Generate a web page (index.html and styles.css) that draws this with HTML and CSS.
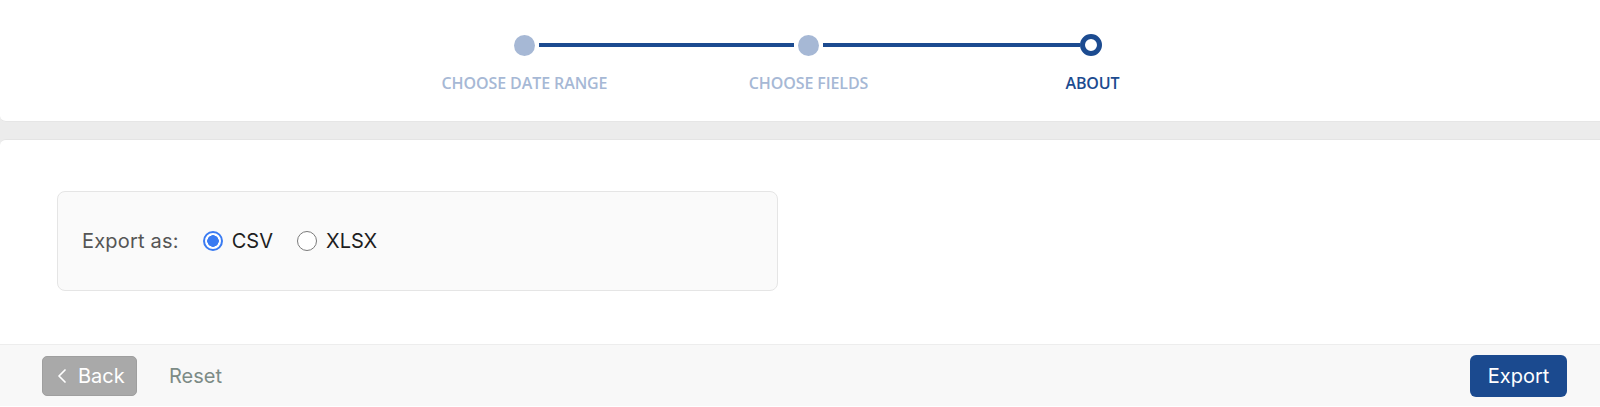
FILE: index.html
```html
<!DOCTYPE html>
<html>
<head>
<meta charset="utf-8">
<link rel="stylesheet" href="styles.css">
</head>
<body>
<div class="shell">
  <header class="header">
    <div class="stepper">
      <div class="step done">
        <div class="track"><span class="line hidden"></span><span class="dot"></span><span class="line"></span></div>
        <div class="label">CHOOSE DATE RANGE</div>
      </div>
      <div class="step done">
        <div class="track"><span class="line"></span><span class="dot"></span><span class="line"></span></div>
        <div class="label">CHOOSE FIELDS</div>
      </div>
      <div class="step current">
        <div class="track"><span class="line"></span><span class="dot"></span><span class="line hidden"></span></div>
        <div class="label">ABOUT</div>
      </div>
    </div>
  </header>
  <main class="panel">
    <div class="body">
      <div class="export-box">
        <span class="export-label">Export as:</span>
        <label class="opt"><span class="radio checked"></span><span>CSV</span></label>
        <label class="opt"><span class="radio"></span><span>XLSX</span></label>
      </div>
    </div>
    <footer class="footer">
      <div class="left">
        <button class="btn back"><svg width="8" height="14" viewBox="0 0 8 14"><polyline points="7,1 1,7 7,13" fill="none" stroke="#fff" stroke-width="1.7" stroke-linecap="round" stroke-linejoin="round"/></svg><span>Back</span></button>
        <button class="btn reset">Reset</button>
      </div>
      <button class="btn primary">Export</button>
    </footer>
  </main>
</div>
</body>
</html>
```
FILE: styles.css
```css
* { box-sizing: border-box; }
html, body { margin: 0; padding: 0; background: #fff; }
body { font-family: Inter, "Noto Sans", sans-serif; }

.shell {
  background: #ececec;
  height: 406px;
  border-bottom: 1px solid #e2e2e2;
}

.header {
  background: #fff;
  height: 122px;
  border-radius: 0 0 0 6px;
  padding-top: 34px;
  border-bottom: 1px solid #e6e6e6;
}

.stepper {
  display: grid;
  grid-template-columns: repeat(3, 284px);
  justify-content: center;
  padding-left: 17px;
}

.step { display: flex; flex-direction: column; align-items: center; }

.track {
  display: flex;
  align-items: center;
  width: 100%;
  height: 22px;
}
.line { flex: 1; height: 4px; background: #1c4b90; }
.line.hidden { background: transparent; }
.track .line:first-child { margin-right: 4px; }
.track .line:last-child { margin-left: 4px; }
.current .track .line:first-child { margin-right: 0; }

.dot {
  width: 21px; height: 21px;
  border-radius: 50%;
  background: #a6b8d5;
  flex: none;
}
.current .dot { width: 22px; height: 22px; background: #fff; border: 5px solid #1c4b90; }

.label {
  margin-top: 17px;
  font-family: "Open Sans", sans-serif;
  font-weight: 600;
  font-size: 16px;
  line-height: 20px;
  color: #a6b8d5;
  letter-spacing: -0.1px;
}
.current .label { color: #1c4b90; }

.panel {
  margin-top: 17px;
  background: #fff;
  border-radius: 6px 0 0 0;
  border-top: 1px solid #e4e4e4;
  height: 267px;
  display: flex;
  flex-direction: column;
}

.body { flex: 1; padding: 51px 0 0 57px; }

.export-box {
  width: 721px;
  height: 100px;
  border: 1px solid #e5e5e5;
  border-radius: 8px;
  background: #fafafa;
  display: flex;
  align-items: center;
  padding-left: 24px;
  font-size: 20px;
}
.export-label { color: #555; margin-right: 24px; letter-spacing: 0.2px; }
.opt { display: flex; align-items: center; gap: 9px; color: #1e1e1e; margin-right: 24px; }
.radio {
  width: 20px; height: 20px;
  border-radius: 50%;
  border: 1.5px solid #7a7a7a;
  background: #fff;
  flex: none;
}
.radio.checked {
  border: 2px solid #3a7bf2;
  background: radial-gradient(circle, #3a7bf2 0 5.5px, #fff 6px);
}

.footer {
  height: 62px;
  background: #f8f8f8;
  border-top: 1px solid #ededed;
  display: flex;
  align-items: center;
  justify-content: space-between;
  padding: 0 33px 0 42px;
}
.left { display: flex; align-items: center; gap: 32px; }

.btn {
  font-family: Inter, "Noto Sans", sans-serif;
  font-size: 20px;
  border: none;
  background: none;
  padding: 0;
  cursor: pointer;
}
.back {
  width: 95px; height: 40px;
  background: #a9a9a9;
  border: 1px solid #9f9f9f;
  border-radius: 5px;
  color: #fff;
  display: flex;
  align-items: center;
  padding-left: 15px;
  gap: 12px;
}
.reset { color: #7c8b86; }
.primary {
  width: 97px; height: 42px;
  background: #1b4a8f;
  color: #fff;
  border-radius: 6px;
}
```
